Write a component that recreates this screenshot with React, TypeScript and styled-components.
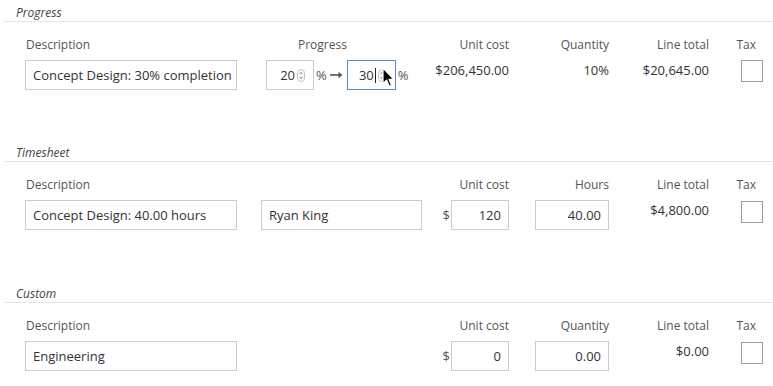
import styled, { createGlobalStyle } from 'styled-components';

const GlobalStyle = createGlobalStyle`
  * { box-sizing: border-box; }
  body {
    margin: 0;
    background: #fff;
    font-family: "Open Sans", "Liberation Sans", sans-serif;
    color: #333;
  }
`;

type Align = 'left' | 'right';

function Spinner() {
  return (
    <svg width="8" height="13" viewBox="0 0 8 13">
      <rect x="0.5" y="0.5" width="7" height="12" rx="3.5" fill="#fff" stroke="#c4c4c4" />
      <path d="M2.3 5.2 L4 3.4 L5.7 5.2" fill="none" stroke="#666" strokeWidth="0.9" />
      <path d="M2.3 7.8 L4 9.6 L5.7 7.8" fill="none" stroke="#666" strokeWidth="0.9" />
    </svg>
  );
}

function Arrow() {
  return (
    <svg width="14" height="10" viewBox="0 0 14 10">
      <path d="M0 5 H11" stroke="#555" strokeWidth="1.6" />
      <path d="M8.5 1.8 L12.5 5 L8.5 8.2 Z" fill="#555" />
    </svg>
  );
}

function Pointer() {
  return (
    <svg width="13" height="21" viewBox="0 0 13 21">
      <path
        d="M1 1 L1 16.5 L4.6 13.1 L7.3 19.4 L9.6 18.4 L7 12.3 L11.8 12.3 Z"
        fill="#000"
        stroke="#fff"
        strokeWidth="1.2"
        strokeLinejoin="round"
      />
    </svg>
  );
}

function Section({ title, children }: { title: string; children: React.ReactNode }) {
  return (
    <SectionBox>
      <SectionTitle>{title}</SectionTitle>
      <Grid>{children}</Grid>
    </SectionBox>
  );
}

export default function App() {
  return (
    <Page>
      <GlobalStyle />

      <Section title="Progress">
        <Label $pl={1}>Description</Label>
        <Label $pl={61}>Progress</Label>
        <Label $align="right">Unit cost</Label>
        <Label $align="right">Quantity</Label>
        <Label $align="right">Line total</Label>
        <Label $align="right" $pr={7}>Tax</Label>

        <TextField readOnly value="Concept Design: 30% completion" $w={212} />
        <ProgressGroup>
          <NumBox $w={48}>
            20
            <SpinWrap>
              <Spinner />
            </SpinWrap>
          </NumBox>
          <Pct>%</Pct>
          <ArrowWrap>
            <Arrow />
          </ArrowWrap>
          <NumBox $w={49} $focus>
            30
            <Caret />
            <SpinWrap>
              <Spinner />
            </SpinWrap>
            <PointerWrap>
              <Pointer />
            </PointerWrap>
          </NumBox>
          <Pct>%</Pct>
        </ProgressGroup>
        <Value>$206,450.00</Value>
        <Value>10%</Value>
        <Value>$20,645.00</Value>
        <Check />
      </Section>

      <Section title="Timesheet">
        <Label $pl={1}>Description</Label>
        <Label />
        <Label $align="right">Unit cost</Label>
        <Label $align="right">Hours</Label>
        <Label $align="right">Line total</Label>
        <Label $align="right" $pr={7}>Tax</Label>

        <TextField readOnly value="Concept Design: 40.00 hours" $w={212} />
        <TextField readOnly value="Ryan King" $w={161} $ml={24} />
        <Money>
          <Dollar>$</Dollar>
          <TextField readOnly value="120" $w={58} $right />
        </Money>
        <Money>
          <TextField readOnly value="40.00" $w={74} $right />
        </Money>
        <Value>$4,800.00</Value>
        <Check $mt={1} />
      </Section>

      <Section title="Custom">
        <Label $pl={1}>Description</Label>
        <Label />
        <Label $align="right">Unit cost</Label>
        <Label $align="right">Quantity</Label>
        <Label $align="right">Line total</Label>
        <Label $align="right" $pr={7}>Tax</Label>

        <TextField readOnly value="Engineering" $w={212} />
        <div />
        <Money>
          <Dollar>$</Dollar>
          <TextField readOnly value="0" $w={58} $right />
        </Money>
        <Money>
          <TextField readOnly value="0.00" $w={74} $right />
        </Money>
        <Value>$0.00</Value>
        <Check $mt={1} />
      </Section>
    </Page>
  );
}

const Page = styled.div`
  width: 773px;
  height: 386px;
  overflow: hidden;
`;

const SectionBox = styled.section`
  margin-left: 4px;
  height: 140px;

  & + & + & {
    margin-top: 1px;
  }
`;

const SectionTitle = styled.div`
  height: 16px;
  padding: 5px 0 0 12px;
  box-sizing: content-box;
  border-bottom: 1px solid #e6e6e6;
  font-size: 12px;
  line-height: 16px;
  font-style: italic;
  color: #444;
`;

const Grid = styled.div`
  display: grid;
  grid-template-columns: 212px 184px 88px 100px 100px 54px;
  row-gap: 7px;
  align-items: start;
  padding: 15px 0 0 21px;
`;

const Label = styled.div<{ $align?: Align; $pl?: number; $pr?: number }>`
  font-size: 12px;
  line-height: 16px;
  height: 16px;
  color: #555;
  text-align: ${(p) => p.$align ?? 'left'};
  padding-left: ${(p) => p.$pl ?? 0}px;
  padding-right: ${(p) => p.$pr ?? 0}px;
  white-space: nowrap;
`;

const TextField = styled.input<{ $w: number; $right?: boolean; $ml?: number }>`
  display: block;
  width: ${(p) => p.$w}px;
  height: 30px;
  margin: 0 0 0 ${(p) => p.$ml ?? 0}px;
  padding: ${(p) => (p.$right ? '0 7px 0 2px' : '0 1px 0 7px')};
  border: 1px solid #ccc;
  border-radius: 0;
  background: #fff;
  font-family: "Open Sans", "Liberation Sans", sans-serif;
  font-size: 13px;
  color: #333;
  text-align: ${(p) => (p.$right ? 'right' : 'left')};
  outline: none;
`;

const ProgressGroup = styled.div`
  display: flex;
  align-items: center;
  height: 30px;
  margin-left: 29px;
`;

const NumBox = styled.div<{ $w: number; $focus?: boolean }>`
  position: relative;
  display: flex;
  align-items: center;
  justify-content: flex-end;
  width: ${(p) => p.$w}px;
  height: 30px;
  padding-right: ${(p) => (p.$focus ? 9 : 8)}px;
  border: 1px solid ${(p) => (p.$focus ? '#5a8db5' : '#ccc')};
  font-size: 13px;
  color: #333;
`;

const SpinWrap = styled.span`
  display: flex;
  margin-left: 2px;
`;

const Caret = styled.span`
  width: 1px;
  height: 15px;
  margin-left: 1px;
  background: #222;
`;

const PointerWrap = styled.span`
  position: absolute;
  left: 34px;
  top: 6px;
  display: flex;
`;

const Pct = styled.span`
  margin-left: 2px;
  font-size: 13px;
  color: #555;
`;

const ArrowWrap = styled.span`
  display: flex;
  margin: 0 3px 0 3px;
`;

const Value = styled.div`
  padding-top: 2px;
  font-size: 13px;
  line-height: 17px;
  color: #333;
  text-align: right;
  white-space: nowrap;
`;

const Money = styled.div`
  display: flex;
  align-items: center;
  justify-content: flex-end;
`;

const Dollar = styled.span`
  margin-right: 1px;
  font-size: 13px;
  color: #555;
`;

const Check = styled.div<{ $mt?: number }>`
  justify-self: end;
  width: 22px;
  height: 22px;
  margin-top: ${(p) => p.$mt ?? 0}px;
  border: 1px solid #a29d99;
  background: #fff;
`;
